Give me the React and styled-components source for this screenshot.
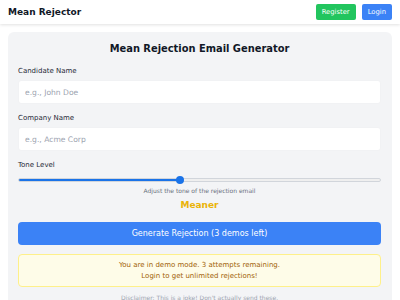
import React from "react";
import styled, { createGlobalStyle } from "styled-components";

const Global = createGlobalStyle`
  html, body { margin: 0; padding: 0; background: #ffffff; }
  body { font-family: "DejaVu Sans", "Liberation Sans", sans-serif; color: #111827; }
  * { box-sizing: border-box; }
`;

const Header = styled.header`
  height: 24px;
  padding: 0 8px;
  display: flex;
  align-items: center;
  justify-content: space-between;
  background: #ffffff;
  box-shadow: 0 1px 3px rgba(0, 0, 0, 0.12);
  position: relative;
`;

const Brand = styled.div`
  font-size: 9px;
  font-weight: 700;
  color: #111827;
`;

const Nav = styled.nav`
  display: flex;
  gap: 6px;
`;

const NavButton = styled.button`
  height: 16px;
  padding: 0 ${(p) => p.$px}px;
  border: none;
  border-radius: 2px;
  background: ${(p) => p.$bg};
  color: #ffffff;
  font-family: inherit;
  font-size: 6.8px;
  line-height: 16px;
`;

const Main = styled.main`
  padding: 8px;
`;

const Card = styled.section`
  background: #f3f4f6;
  border-radius: 6px;
  padding: 10px 11px 10px 10px;
`;

const Title = styled.h1`
  margin: 0 0 9px;
  font-size: 9.9px;
  line-height: 14px;
  font-weight: 700;
  text-align: center;
  color: #111827;
`;

const Field = styled.div`
  margin-bottom: ${(p) => p.$mb ?? 8}px;
`;

const Label = styled.label`
  display: block;
  font-size: 7px;
  line-height: 12px;
  color: #1f2937;
  margin-bottom: 3px;
`;

const Input = styled.input`
  display: block;
  width: 100%;
  height: 24px;
  border: 1px solid #f1f2f4;
  border-radius: 3px;
  background: #ffffff;
  padding: 0 6px;
  font-family: inherit;
  font-size: 7.6px;
  color: #111827;
  outline: none;
  &::placeholder { color: #9ca3af; }
`;

const Range = styled.input`
  -webkit-appearance: none;
  appearance: none;
  display: block;
  width: 100%;
  height: 12px;
  margin: 1px 0 0;
  background: transparent;
  &::-webkit-slider-runnable-track {
    height: 4px;
    border-radius: 2px;
    border: 1px solid #d1d5db;
    background: linear-gradient(to right, #1a73e8 0 44.6%, #efefef 44.6% 100%);
  }
  &::-webkit-slider-thumb {
    -webkit-appearance: none;
    width: 8px;
    height: 8px;
    border-radius: 50%;
    background: #1a73e8;
    margin-top: -3px;
    border: none;
  }
`;

const Hint = styled.p`
  margin: 0;
  font-size: 6px;
  line-height: 10px;
  color: #6b7280;
  text-align: center;
`;

const Level = styled.div`
  margin-top: 2px;
  font-size: 9px;
  line-height: 14px;
  font-weight: 700;
  color: #eab308;
  text-align: center;
`;

const Generate = styled.button`
  display: block;
  width: 100%;
  height: 23px;
  margin-top: 10px;
  border: none;
  border-radius: 4px;
  background: #3b82f6;
  color: #ffffff;
  font-family: inherit;
  font-size: 8px;
`;

const Notice = styled.div`
  margin-top: 9px;
  padding: 5px 8px;
  background: #fefce8;
  border: 1px solid #fef08a;
  border-radius: 4px;
  color: #a16207;
  font-size: 7px;
  line-height: 10.5px;
  text-align: center;
`;

const Disclaimer = styled.p`
  margin: 6px 0 0;
  font-size: 6px;
  line-height: 10px;
  color: #9ca3af;
  text-align: center;
`;

export default function App() {
  return (
    <>
      <Global />
      <Header>
        <Brand>Mean Rejector</Brand>
        <Nav>
          <NavButton $bg="#22c55e" $px={6}>Register</NavButton>
          <NavButton $bg="#3b82f6" $px={6}>Login</NavButton>
        </Nav>
      </Header>
      <Main>
        <Card>
          <Title>Mean Rejection Email Generator</Title>
          <Field>
            <Label>Candidate Name</Label>
            <Input placeholder="e.g., John Doe" />
          </Field>
          <Field>
            <Label>Company Name</Label>
            <Input placeholder="e.g., Acme Corp" />
          </Field>
          <Field $mb={0}>
            <Label>Tone Level</Label>
            <Range type="range" min={1} max={10} defaultValue={5} />
            <Hint>Adjust the tone of the rejection email</Hint>
          </Field>
          <Level>Meaner</Level>
          <Generate>Generate Rejection (3 demos left)</Generate>
          <Notice>
            You are in demo mode. 3 attempts remaining.
            <br />
            Login to get unlimited rejections!
          </Notice>
          <Disclaimer>Disclaimer: This is a joke! Don't actually send these.</Disclaimer>
        </Card>
      </Main>
    </>
  );
}
